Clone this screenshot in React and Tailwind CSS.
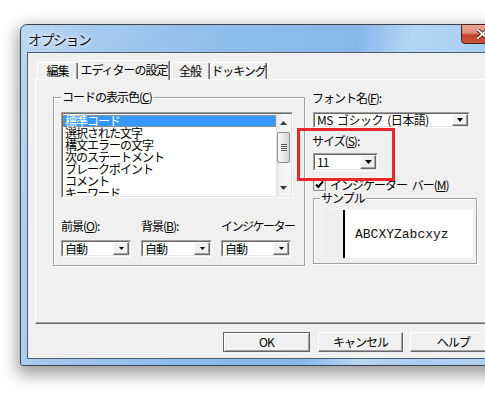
import React from "react";

function Tri({ up = false, w = 7, h = 4, color = "#000" }) {
  return (
    <svg width={w} height={h} viewBox={`0 0 ${w} ${h}`}>
      {up ? (
        <polygon points={`0,${h} ${w},${h} ${w / 2},0`} fill={color} />
      ) : (
        <polygon points={`0,0 ${w},0 ${w / 2},${h}`} fill={color} />
      )}
    </svg>
  );
}

function Combo({ className, text, tw = 7, th = 4, textCls = "tracking-[-1px]" }) {
  return (
    <div className={`${className} border border-t-[#a0a0a0] border-l-[#a0a0a0] border-r-white border-b-white`}>
      <div className="h-full flex border border-t-[#696969] border-l-[#696969] border-r-[#e3e3e3] border-b-[#e3e3e3] bg-white">
        <div className={`${textCls} flex-1 pl-[2px] flex items-center text-[12px] leading-[12px] text-black whitespace-nowrap`}>
          {text}
        </div>
        <div className="w-[16px] h-full flex items-center justify-center bg-[#f0f0f0] border border-t-white border-l-white border-r-[#696969] border-b-[#696969] shadow-[inset_-1px_-1px_0_#a0a0a0]">
          <Tri w={tw} h={th} />
        </div>
      </div>
    </div>
  );
}

function Tab({ children, selected, className }) {
  if (selected) {
    return (
      <div
        className={`${className} relative z-10 h-[20px] mb-[-1px] bg-[#f0f0f0] border-t border-l border-t-white border-l-white border-r border-r-[#696969] shadow-[inset_-1px_0_0_#a0a0a0] rounded-t-[2px] flex items-start justify-center pt-[3px] text-[12px] leading-[12px] tracking-[-1px] whitespace-nowrap`}
      >
        {children}
      </div>
    );
  }
  return (
    <div
      className={`${className} h-[17px] bg-[#f0f0f0] border-t border-l border-t-white border-l-white border-r border-r-[#696969] shadow-[inset_-1px_0_0_#a0a0a0] rounded-t-[2px] flex items-start justify-center pt-[2px] text-[12px] leading-[12px] tracking-[-1px] whitespace-nowrap`}
    >
      {children}
    </div>
  );
}

function Btn({ children, def, className }) {
  return (
    <div
      className={`${className} h-[20px] flex items-center justify-center text-[12px] leading-[12px] tracking-[-1px] bg-[#f0f0f0] ${
        def
          ? "border border-[#646464] shadow-[inset_1px_1px_0_#fff,inset_-1px_-1px_0_#a0a0a0]"
          : "border border-t-white border-l-white border-r-[#696969] border-b-[#696969] shadow-[inset_-1px_-1px_0_#a0a0a0]"
      }`}
    >
      {children}
    </div>
  );
}

const items = [
  "標準コード",
  "選択された文字",
  "構文エラーの文字",
  "次のステートメント",
  "ブレークポイント",
  "コメント",
  "キーワード",
];

export default function App() {
  return (
    <div className="relative w-[485px] h-[400px] bg-white overflow-hidden text-black font-['Noto_Sans_CJK_JP',sans-serif]">
      {/* window */}
      <div className="absolute left-[20px] top-[24px] w-[490px] h-[342px] rounded-t-[7px] rounded-b-[3px] border border-[#39424d] bg-[linear-gradient(100deg,#bcd7f1_0%,#a5c9ee_14%,#8fbdeb_38%,#88b8e9_62%,#b6d6f5_72%,#a8cdf2_84%,#b2d3f4_100%)] shadow-[0_6px_16px_3px_rgba(0,0,0,0.38)] flex flex-col">
        {/* title */}
        <div className="h-[27px] flex items-center pl-[7px] shrink-0">
          <span className="text-[14px] leading-[14px] tracking-[-1.5px] text-[#111] [text-shadow:0_0_6px_#fff,0_0_3px_#fff]">
            オプション
          </span>
        </div>

        {/* close button */}
        <div className="absolute left-[440px] top-[-1px] w-[43px] h-[20px] rounded-b-[4px] border border-[#4c1d15] bg-[linear-gradient(to_bottom,#e6a898_0%,#d98a76_45%,#c4432b_55%,#c9553a_100%)] flex items-center justify-center">
          <svg width="11" height="10" viewBox="0 0 11 10">
            <path d="M1 1 L10 9 M10 1 L1 9" stroke="#3a1a14" strokeWidth="3.4" strokeLinecap="square" />
            <path d="M1 1 L10 9 M10 1 L1 9" stroke="#fff" strokeWidth="1.8" strokeLinecap="square" />
          </svg>
        </div>

        {/* client */}
        <div className="flex-1 mx-[6px] mb-[6px] border border-[#4e5d6e] bg-[#f0f0f0] flex flex-col pt-[7px] pl-[7px] pr-[6px]">
          {/* tabs */}
          <div className="h-[19px] flex items-end pl-[2px]">
            <Tab className="w-[41px]">編集</Tab>
            <Tab selected className="w-[92px]">エディターの設定</Tab>
            <Tab className="w-[40px]">全般</Tab>
            <Tab className="w-[57px]">ドッキング</Tab>
          </div>

          {/* panel */}
          <div className="w-[461px] h-[245px] border border-t-white border-l-white border-r-[#696969] border-b-[#696969] shadow-[inset_-1px_-1px_0_#a0a0a0] flex items-start pt-[17px] pl-[17px]">
            {/* group: code colors */}
            <div className="relative w-[252px] h-[169px] border border-[#a0a0a0] shadow-[inset_1px_1px_0_#fff,1px_1px_0_#fff] pt-[14px] pl-[7px] flex flex-col">
              <span className="absolute left-[7px] top-[-7px] px-[1px] bg-[#f0f0f0] text-[12px] leading-[12px] tracking-[-1px] whitespace-nowrap">
                コードの表示色(<span className="underline">C</span>)
              </span>

              {/* listbox */}
              <div className="w-[232px] h-[86px] border border-t-[#a0a0a0] border-l-[#a0a0a0] border-r-white border-b-white">
                <div className="h-full flex border border-t-[#696969] border-l-[#696969] border-r-[#e3e3e3] border-b-[#e3e3e3] bg-white overflow-hidden">
                  <div className="flex-1 flex flex-col pt-[1px] overflow-hidden">
                    {items.map((t, i) => (
                      <div
                        key={t}
                        className={
                          i === 0
                            ? "h-[12px] shrink-0 flex items-center pl-[1px] bg-[#3399ff] text-white border border-dotted border-[#d08a3c] text-[12px] leading-[12px] tracking-[-1px] whitespace-nowrap"
                            : "h-[12px] shrink-0 flex items-center pl-[2px] text-[12px] leading-[12px] tracking-[-1px] whitespace-nowrap"
                        }
                      >
                        {t}
                      </div>
                    ))}
                  </div>
                  {/* scrollbar */}
                  <div className="w-[15px] h-full flex flex-col items-center bg-[linear-gradient(to_right,#e3e3e3,#f3f3f3_35%,#f6f6f6)]">
                    <div className="h-[17px] flex items-center justify-center">
                      <Tri up w={7} h={4} color="#3c3c3c" />
                    </div>
                    <div className="w-[13px] h-[31px] mt-[1px] rounded-[2px] border border-[#8f8f8f] bg-[linear-gradient(to_right,#f7f7f7,#e9e9e9_50%,#d4d4d4)] flex flex-col items-center justify-center gap-[1px]">
                      <div className="w-[6px] h-[1px] bg-[#555]" />
                      <div className="w-[6px] h-[1px] bg-[#555]" />
                      <div className="w-[6px] h-[1px] bg-[#555]" />
                      <div className="w-[6px] h-[1px] bg-[#555]" />
                    </div>
                    <div className="flex-1" />
                    <div className="h-[17px] flex items-center justify-center">
                      <Tri w={7} h={4} color="#3c3c3c" />
                    </div>
                  </div>
                </div>
              </div>

              {/* colors row */}
              <div className="flex gap-[10px] mt-[22px]">
                <div className="w-[70px] flex flex-col">
                  <span className="text-[12px] leading-[12px] tracking-[-1px] whitespace-nowrap">
                    前景(<span className="underline">O</span>):
                  </span>
                  <Combo className="w-[70px] h-[17px] mt-[8px]" text="自動" tw={5} th={3} />
                </div>
                <div className="w-[70px] flex flex-col">
                  <span className="text-[12px] leading-[12px] tracking-[-1px] whitespace-nowrap">
                    背景(<span className="underline">B</span>):
                  </span>
                  <Combo className="w-[71px] h-[17px] mt-[8px]" text="自動" tw={5} th={3} />
                </div>
                <div className="w-[70px] flex flex-col">
                  <span className="text-[12px] leading-[12px] tracking-[-1.5px] whitespace-nowrap">
                    インジケーター
                  </span>
                  <Combo className="w-[70px] h-[17px] mt-[8px]" text="自動" tw={5} th={3} />
                </div>
              </div>
            </div>

            {/* right column */}
            <div className="ml-[7px] mt-[-5px] w-[165px] flex flex-col">
              <span className="text-[12px] leading-[12px] tracking-[-1px] whitespace-nowrap">
                フォント名(<span className="underline">F</span>):
              </span>
              <Combo
                className="w-[157px] h-[16px] mt-[8px] ml-[1px]"
                text="MS ゴシック (日本語)"
                textCls="tracking-[-0.5px] [word-spacing:2px]"
                tw={6}
                th={4}
              />
              <span className="mt-[7px] text-[12px] leading-[12px] tracking-[-1px] whitespace-nowrap">
                サイズ(<span className="underline">S</span>):
              </span>
              <Combo className="w-[65px] h-[18px] mt-[6px] ml-[1px]" text="11" tw={7} th={4} />
              <div className="mt-[7px] ml-[1px] h-[13px] flex items-center gap-[4px]">
                <svg width="13" height="13" viewBox="0 0 13 13">
                  <rect x="0.5" y="0.5" width="12" height="12" fill="#fff" stroke="#8e8f8f" />
                  <rect x="1.5" y="1.5" width="10" height="10" fill="#f4f4f4" stroke="#e0e0e0" />
                  <polyline points="3,6.5 5.3,9 10,3.3" fill="none" stroke="#000" strokeWidth="2" />
                </svg>
                <span className="text-[12px] leading-[12px] tracking-[-1px] [word-spacing:3px] whitespace-nowrap">
                  インジケーター バー(<span className="underline">M</span>)
                </span>
              </div>

              {/* sample group */}
              <div className="relative mt-[7px] ml-[1px] w-[164px] h-[66px] border border-[#a0a0a0] shadow-[inset_1px_1px_0_#fff,1px_1px_0_#fff] pt-[10px] pl-[7px]">
                <span className="absolute left-[6px] top-[-7px] px-[1px] bg-[#f0f0f0] text-[12px] leading-[12px] tracking-[-1px] whitespace-nowrap">
                  サンプル
                </span>
                <div className="w-[152px] h-[49px] flex bg-white border-t border-l border-[#f7f7f7]">
                  <div className="w-[21px] h-full bg-[#efefef]" />
                  <div className="w-[2px] h-full bg-black" />
                  <div className="flex-1 flex items-center pl-[10px] font-['Liberation_Mono',monospace] text-[13px] leading-[13px] text-[#111]">
                    ABCXYZabcxyz
                  </div>
                </div>
              </div>
            </div>
          </div>

          {/* buttons */}
          <div className="flex mt-[8px] pl-[188px]">
            <Btn def className="w-[88px]">OK</Btn>
            <Btn className="w-[87px] ml-[8px]">キャンセル</Btn>
            <Btn className="w-[87px] ml-[7px]">ヘルプ</Btn>
          </div>
        </div>
      </div>

      {/* red annotation box */}
      <div className="absolute left-[297px] top-[128px] w-[98px] h-[53px] border-[3px] border-[#e8262b]" />
    </div>
  );
}
